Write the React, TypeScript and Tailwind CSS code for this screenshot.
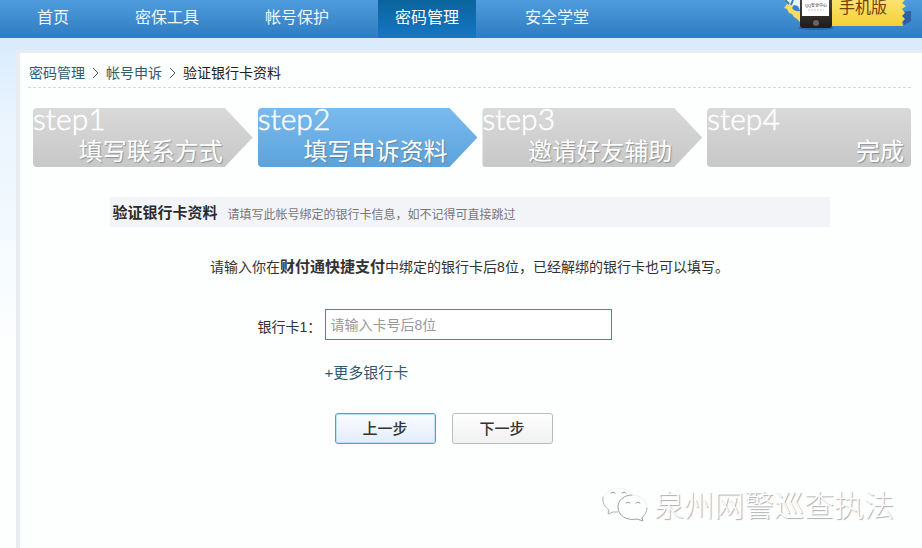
import { useState } from "react";
import clsx from "clsx";

const NAV = ["首页", "密保工具", "帐号保护", "密码管理", "安全学堂"];

const STEPS = [
  { title: "step1", label: "填写联系方式" },
  { title: "step2", label: "填写申诉资料" },
  { title: "step3", label: "邀请好友辅助" },
  { title: "step4", label: "完成" },
];

function MobileBadge() {
  return (
    <a href="#mobile" className="absolute top-0 right-2 block h-8 w-[130px]">
      <svg viewBox="0 0 130 32" className="block h-8 w-[130px]" aria-hidden="true">
        <defs>
          <linearGradient id="ribbon" x1="0" y1="0" x2="0" y2="1">
            <stop offset="0" stopColor="#fbe36e" />
            <stop offset="1" stopColor="#f5cf35" />
          </linearGradient>
          <linearGradient id="phone" x1="0" y1="0" x2="0" y2="1">
            <stop offset="0" stopColor="#45423f" />
            <stop offset="1" stopColor="#1f1c1a" />
          </linearGradient>
        </defs>
        <path d="M117 12 L127 11 V21 L120 25 Z" fill="#2b61a4" />
        <path d="M0 0 H18 V24 L13 19 L10 17 L8 14 L5 13 L3 9 L0 8 L3 4 Z" fill="#f6dc63" />
        <path d="M2 0 L6 2 L7 5 L12 6 L17 11 V0 Z" fill="#e6f4fb" />
        <path d="M1 0 L5 4 M9 0 L7 5" stroke="#2f7fc4" strokeWidth="2" />
        <path d="M10 5 Q15 5 16 11 Q11 12 8 8 Z" fill="#3584c9" />
        <path d="M40 0 H121 L118 3 L122 6 L118 9 L121 13 L118 16 L121 19 L118 22 L119 26 H40 Z" fill="url(#ribbon)" />
        <ellipse cx="32" cy="28" rx="18" ry="2" fill="#1d4f86" opacity="0.5" />
        <path d="M16 0 H48 V25 Q48 28 45 28 H19 Q16 28 16 25 Z" fill="url(#phone)" />
        <rect x="18" y="0" width="27" height="16" fill="#fff" />
        <text x="32" y="7" textAnchor="middle" fontSize="4" fill="#222" fontFamily="'Liberation Sans', 'Noto Sans CJK SC', sans-serif">
          QQ安全中心
        </text>
        <path d="M24 10 H40" stroke="#c3c6ca" strokeDasharray="2 1" />
        <circle cx="32" cy="23" r="3" fill="#6b6260" />
      </svg>
      <span className="absolute top-0 left-[55px] text-base leading-4 whitespace-nowrap text-[#72440c]">
        手机版
      </span>
    </a>
  );
}

function Header() {
  return (
    <header className="relative h-[38px] bg-linear-to-b from-[#4e9bdd] to-[#2f7cc1]">
      <nav className="flex h-full gap-8 pl-5">
        {NAV.map((item) => (
          <a
            key={item}
            href="#nav"
            className={clsx(
              "flex items-center px-[17px] pb-[2px] text-base leading-6 whitespace-nowrap",
              item === "密码管理"
                ? "bg-linear-to-b from-[#0a639c] to-[#1577c4] text-white"
                : "text-[#eef7ff]",
            )}
          >
            {item}
          </a>
        ))}
      </nav>
      <MobileBadge />
    </header>
  );
}

function Steps() {
  return (
    <ol className="mt-5 ml-[5px] grid grid-cols-[220fr_220fr_220fr_204fr] gap-[5px]">
      {STEPS.map((step, i) => {
        const last = i === STEPS.length - 1;
        return (
          <li
            key={step.title}
            className={clsx(
              "flex h-[59px] flex-col justify-between rounded-[4px] pb-px text-white",
              i === 1 ? "bg-linear-to-b from-[#7abbee] to-[#5ba2dc]" : "bg-linear-to-b from-[#d8d9d8] to-[#c7c8c7]",
              last
                ? "pr-[7px]"
                : "pr-[30px] [clip-path:polygon(0_0,calc(100%-28px)_0,100%_50%,calc(100%-28px)_100%,0_100%)]",
            )}
          >
            <span className="font-['Lato','Noto_Sans_CJK_SC',sans-serif] text-[30px] leading-5 font-light [-webkit-text-stroke:0.5px_white]">
              {step.title}
            </span>
            <span className="text-right text-2xl leading-7 whitespace-nowrap [text-shadow:1px_1px_1px_rgba(90,100,110,0.55)]">
              {step.label}
            </span>
          </li>
        );
      })}
    </ol>
  );
}

function Watermark() {
  return (
    <div className="pointer-events-none absolute right-7 bottom-6 flex items-center gap-[6px] text-white">
      <svg viewBox="0 0 46 36" className="h-9 w-[46px]" fill="none" strokeLinecap="round" aria-hidden="true">
        <path d="M1 9 C0 15 3 19 7 22 L6 26 L11 24 H16" stroke="#b0b0b0" />
        <path d="M2 8 C6 2 11 0 17 0 C23 0 28 3 31 7" stroke="#f0f0f0" />
        <path d="M30 7 C22 7 16 12 16 19 C16 28 25 33 35 31 L41 33 L40 30" stroke="#a0a0a0" />
        <path d="M40 30 C43 27 45 24 45 20" stroke="#b0b0b0" />
        <path d="M30 7 C38 7 44 12 45 18" stroke="#f0f0f0" />
        <path d="M9 5 Q11 3 13 5 M20 5 Q22 3 24 5 M24 15 Q26 13 28 15 M34 15 Q36 13 38 15" stroke="#999" />
      </svg>
      <span className="text-[30px] leading-9 font-light whitespace-nowrap [text-shadow:1px_1px_1px_#aaa]">
        泉州网警巡查执法
      </span>
    </div>
  );
}

export default function App() {
  const [cards, setCards] = useState([""]);

  function updateCard(index: number, value: string) {
    setCards(cards.map((c, i) => (i === index ? value : c)));
  }

  return (
    <div className="relative flex min-h-screen flex-col bg-[#fdfefe] font-['Liberation_Sans','Noto_Sans_CJK_SC',sans-serif] text-sm text-[#333]">
      <Header />

      <div className="flex flex-1 flex-col bg-[linear-gradient(to_bottom,#d8ebfc_0px,#eaf4fd_80px,#f4fbff_200px,#fdfefe_300px)] pt-3 pl-4">
        <main className="flex-1 border-t-[3px] border-l-4 border-[#e9ecf1] bg-[#fdfefe] pr-[11px] pl-2">
          {/* Breadcrumb */}
          <nav className="flex items-center gap-[7px] border-b border-dashed border-[#d5d8da] pt-[10px] pb-1 pl-px leading-5">
            <a href="#password" className="text-[#2f5a6e]">密码管理</a>
            <svg viewBox="0 0 7 12" className="h-3 w-[7px]" fill="none" stroke="#555" aria-hidden="true">
              <path d="M1 1 L6 6 L1 11" />
            </svg>
            <a href="#appeal" className="text-[#2f5a6e]">帐号申诉</a>
            <svg viewBox="0 0 7 12" className="h-3 w-[7px]" fill="none" stroke="#555" aria-hidden="true">
              <path d="M1 1 L6 6 L1 11" />
            </svg>
            <span className="text-[#222]">验证银行卡资料</span>
          </nav>

          <Steps />

          <section className="mx-auto mt-[30px] max-w-[720px]">
            <div className="flex h-[30px] items-center gap-[10px] bg-[#f3f4f7] px-[3px] pt-px">
              <h1 className="text-[15px] leading-5 font-bold text-[#2b2b2b]">验证银行卡资料</h1>
              <span className="pt-1 text-xs text-[#777]">请填写此帐号绑定的银行卡信息，如不记得可直接跳过</span>
            </div>

            <p className="mt-[30px] text-center leading-5">
              请输入你在<strong className="text-[15px]">财付通快捷支付</strong>
              中绑定的银行卡后8位，已经解绑的银行卡也可以填写。
            </p>

            <form className="mt-8 pl-[148px]" onSubmit={(e) => e.preventDefault()}>
              <div className="flex flex-col gap-3">
                {cards.map((card, i) => (
                  <div key={i} className="flex items-center">
                    <label htmlFor={`card-${i}`} className="w-[67px] pt-1 leading-5 whitespace-nowrap">
                      银行卡{i + 1}：
                    </label>
                    <input
                      id={`card-${i}`}
                      type="text"
                      maxLength={8}
                      value={card}
                      onChange={(e) => updateCard(i, e.target.value)}
                      placeholder="请输入卡号后8位"
                      className="h-[31px] w-[287px] border border-[#4f8a80] bg-white px-[5px] placeholder:text-[#999] focus:outline-none"
                    />
                  </div>
                ))}
              </div>

              <button
                type="button"
                onClick={() => setCards([...cards, ""])}
                className="mt-[23px] ml-[67px] block text-[15px] leading-5 text-[#2f5a6e]"
              >
                +更多银行卡
              </button>

              <div className="mt-[30px] ml-[77px] flex gap-4">
                <button
                  type="button"
                  className="h-[31px] w-[101px] rounded-[3px] border border-[#5a9db8] bg-linear-to-b from-[#fbfcff] to-[#e2edf9] text-[15px] font-medium shadow-[inset_0_0_0_1px_#b9e4f5]"
                >
                  上一步
                </button>
                <button
                  type="submit"
                  className="h-[31px] w-[101px] rounded-[3px] border border-[#b9bdbd] bg-linear-to-b from-white to-[#f0f0f1] text-[15px] font-medium"
                >
                  下一步
                </button>
              </div>
            </form>
          </section>
        </main>
      </div>

      <Watermark />
    </div>
  );
}
